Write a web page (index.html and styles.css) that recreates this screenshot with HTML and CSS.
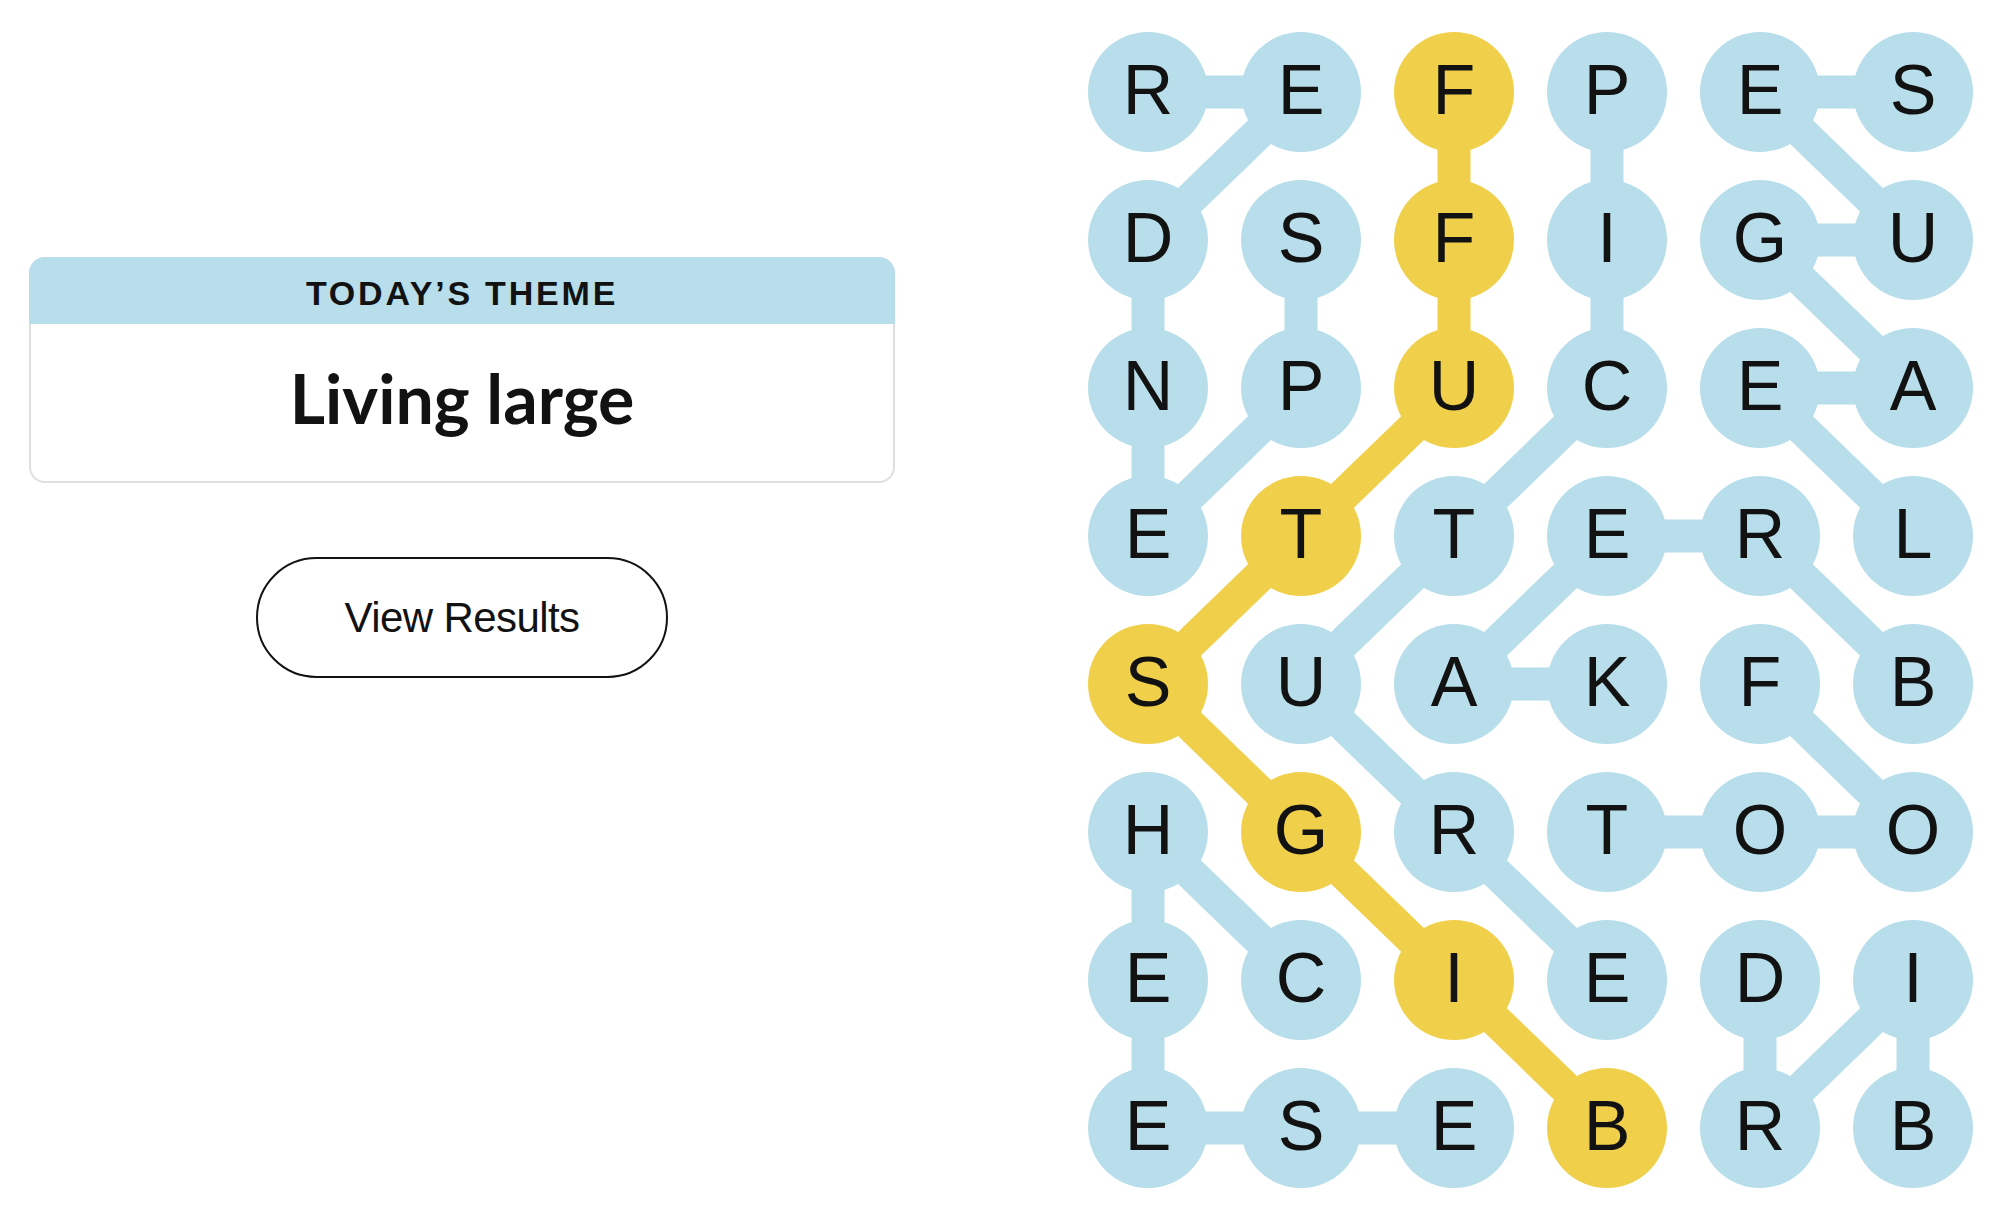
FILE: index.html
```html
<!DOCTYPE html>
<html lang="en">
<head>
<meta charset="utf-8">
<title>Strands – Living large</title>
<link rel="stylesheet" href="styles.css">
</head>
<body>
<main class="page">
  <section class="panel">
    <div class="theme-card">
      <div class="theme-head">TODAY’S THEME</div>
      <div class="theme-body">Living large</div>
    </div>
    <button class="results-btn" type="button">View Results</button>
  </section>

  <section class="board">
    <svg class="links" width="885" height="1156" viewBox="0 0 885 1156" aria-hidden="true">
      <g class="link-blue">
        <polyline points="213,208 213,356 60,504 60,356 60,208 213,60 60,60"/>
        <polyline points="519,60 519,208 519,356 366,504 213,652 366,800 519,948"/>
        <polyline points="825,504 672,356 825,356 672,208 825,208 672,60 825,60"/>
        <polyline points="825,652 672,504 519,504 366,652 519,652"/>
        <polyline points="672,652 825,800 672,800 519,800"/>
        <polyline points="213,948 60,800 60,948 60,1096 213,1096 366,1096"/>
        <polyline points="825,1096 825,948 672,1096 672,948"/>
      </g>
      <g class="link-gold">
        <polyline points="366,60 366,208 366,356 213,504 60,652 213,800 366,948 519,1096"/>
      </g>
    </svg>
    <div class="cells">
      <div class="cell">R</div><div class="cell">E</div><div class="cell gold">F</div><div class="cell">P</div><div class="cell">E</div><div class="cell">S</div>
      <div class="cell">D</div><div class="cell">S</div><div class="cell gold">F</div><div class="cell">I</div><div class="cell">G</div><div class="cell">U</div>
      <div class="cell">N</div><div class="cell">P</div><div class="cell gold">U</div><div class="cell">C</div><div class="cell">E</div><div class="cell">A</div>
      <div class="cell">E</div><div class="cell gold">T</div><div class="cell">T</div><div class="cell">E</div><div class="cell">R</div><div class="cell">L</div>
      <div class="cell gold">S</div><div class="cell">U</div><div class="cell">A</div><div class="cell">K</div><div class="cell">F</div><div class="cell">B</div>
      <div class="cell">H</div><div class="cell gold">G</div><div class="cell">R</div><div class="cell">T</div><div class="cell">O</div><div class="cell">O</div>
      <div class="cell">E</div><div class="cell">C</div><div class="cell gold">I</div><div class="cell">E</div><div class="cell">D</div><div class="cell">I</div>
      <div class="cell">E</div><div class="cell">S</div><div class="cell">E</div><div class="cell gold">B</div><div class="cell">R</div><div class="cell">B</div>
    </div>
  </section>
</main>
</body>
</html>
```

FILE: styles.css
```css
html, body {
  margin: 0;
  padding: 0;
  background: #ffffff;
}

body {
  font-family: "Liberation Sans", Arial, sans-serif;
  color: #121212;
}

.page {
  display: flex;
  justify-content: space-between;
  align-items: flex-start;
  padding: 32px 27px 0 29px;
  width: 2000px;
  height: 1228px;
  box-sizing: border-box;
}

.panel {
  width: 866px;
  margin-top: 225px;
  display: flex;
  flex-direction: column;
  align-items: center;
}

.theme-card {
  width: 100%;
  box-sizing: border-box;
  border: 2px solid #dfdfdf;
  border-top: 0;
  border-radius: 16px;
  background: #ffffff;
}

.theme-head {
  margin: 0 -2px;
  height: 67px;
  box-sizing: border-box;
  padding-top: 5px;
  line-height: 62px;
  background: #b7deea;
  border-radius: 16px 16px 0 0;
  text-align: center;
  font-size: 34px;
  font-weight: 700;
  letter-spacing: 2.8px;
}

.theme-body {
  height: 157px;
  box-sizing: border-box;
  padding-bottom: 9px;
  display: flex;
  align-items: center;
  justify-content: center;
  font-family: Lato, "Liberation Sans", Arial, sans-serif;
  font-size: 68px;
  font-weight: 700;
  line-height: 1;
}

.results-btn {
  margin-top: 74px;
  width: 412px;
  height: 121px;
  box-sizing: border-box;
  border: 2px solid #121212;
  border-radius: 61px;
  background: #ffffff;
  color: #121212;
  font-family: "Liberation Sans", Arial, sans-serif;
  font-size: 42px;
  letter-spacing: -0.6px;
  padding: 0;
  cursor: pointer;
}

.board {
  position: relative;
  width: 885px;
  height: 1156px;
}

.links {
  position: absolute;
  left: 0;
  top: 0;
  z-index: 0;
}

.links polyline {
  fill: none;
  stroke-width: 33;
  stroke-linejoin: round;
}

.link-blue polyline {
  stroke: #b7deea;
}

.link-gold polyline {
  stroke: #f0d04a;
}

.cells {
  position: relative;
  z-index: 1;
  display: grid;
  grid-template-columns: repeat(6, 120px);
  grid-auto-rows: 120px;
  column-gap: 33px;
  row-gap: 28px;
}

.cell {
  width: 120px;
  height: 120px;
  box-sizing: border-box;
  padding-bottom: 4px;
  border-radius: 50%;
  background: #b7deea;
  display: flex;
  align-items: center;
  justify-content: center;
  font-size: 70px;
  line-height: 1;
  color: #121212;
}

.cell.gold {
  background: #f0d04a;
}
```
